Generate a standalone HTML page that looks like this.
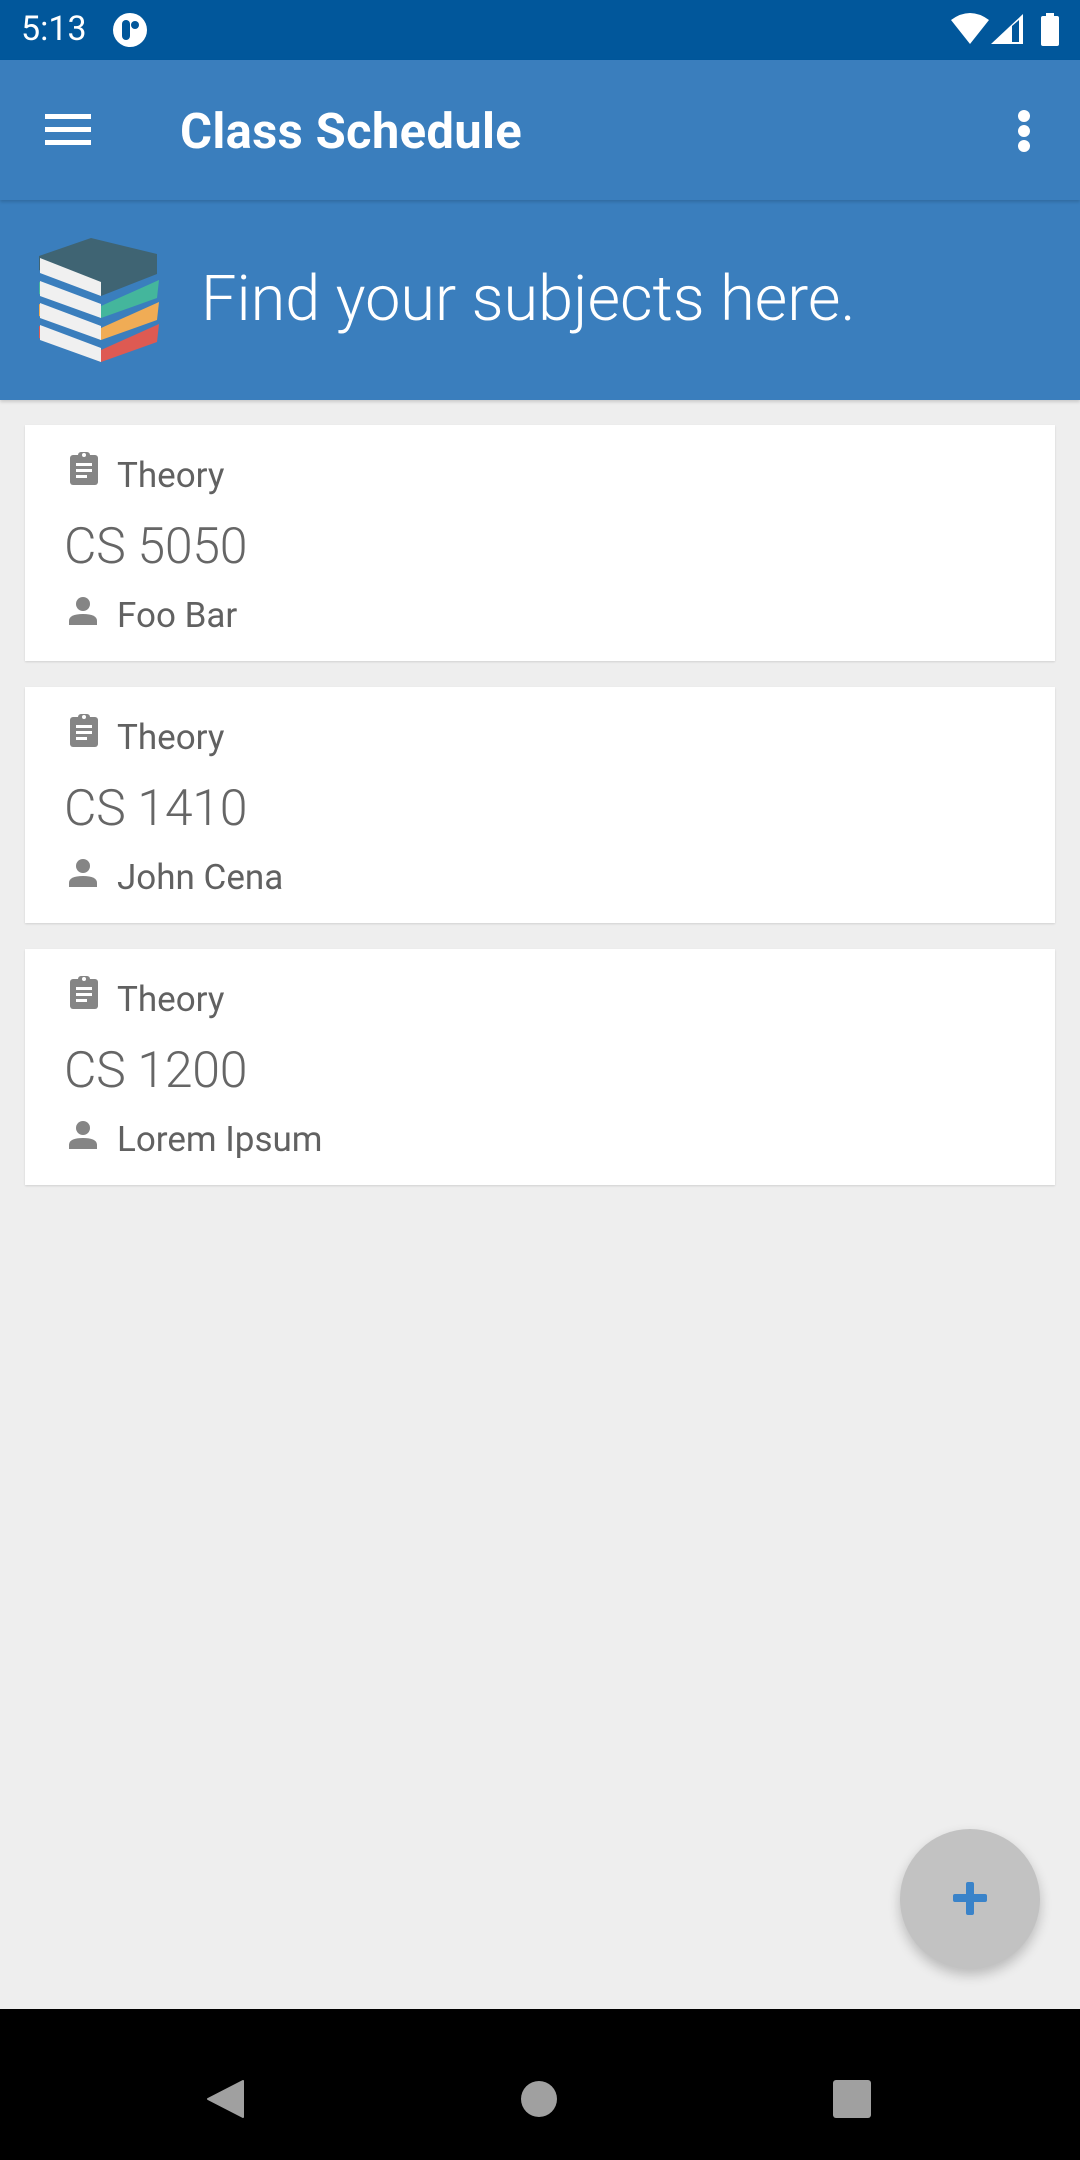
<!DOCTYPE html>
<html><head><meta charset="utf-8"><style>
*{margin:0;padding:0;box-sizing:border-box}
body{width:1080px;height:2160px;background:#eeeeee;position:relative;overflow:hidden;font-family:"Roboto","Liberation Sans",sans-serif}
.abs{position:absolute}
.t{position:absolute;white-space:nowrap;line-height:1}
.card{position:absolute;left:25px;width:1030px;height:236px;background:#fff;box-shadow:0 1px 2px rgba(0,0,0,.12)}
.card .a{left:92px;top:33px;font-size:35px;color:#616161}
.card .b{left:39px;top:97px;font-size:50px;color:#666;font-weight:300;letter-spacing:-0.3px}
.card .c{left:92px;top:173px;font-size:35px;color:#616161}
</style></head><body>
<div class="abs" style="left:0;top:0;width:1080px;height:60px;background:#01579b"></div>
<div class="t" style="left:21px;top:12px;font-size:34px;color:#fff">5:13</div>
<svg class="abs" style="left:112px;top:12px" width="36" height="36" viewBox="0 0 36 36"><circle cx="18" cy="18" r="17" fill="#fff"/><rect x="10" y="8" width="8" height="20" rx="4" fill="#01579b"/><circle cx="23" cy="13" r="4" fill="#01579b"/></svg>
<svg class="abs" style="left:950px;top:12px" width="40" height="34" viewBox="0 0 40 34"><path d="M1 8 Q20 -6 39 8 L20 32 Z" fill="#fff"/></svg>
<svg class="abs" style="left:990px;top:13px" width="34" height="32" viewBox="0 0 34 32"><path d="M1 31 L33 1 L33 31 Z" fill="#fff"/><path d="M22 13 L29 7 L29 29 L22 29 Z" fill="#01579b"/></svg>
<svg class="abs" style="left:1040px;top:13px" width="20" height="33" viewBox="0 0 20 33"><rect x="6" y="0" width="8" height="4" fill="#fff"/><rect x="1" y="3" width="18" height="30" rx="2" fill="#fff"/></svg>

<div class="abs" style="left:0;top:60px;width:1080px;height:140px;background:#3a7ebd;box-shadow:0 2px 3px rgba(0,0,0,.15);z-index:2"></div>
<div class="abs" style="left:45px;top:114px;width:46px;height:5px;background:#fff;z-index:3"></div>
<div class="abs" style="left:45px;top:127px;width:46px;height:5px;background:#fff;z-index:3"></div>
<div class="abs" style="left:45px;top:140px;width:46px;height:5px;background:#fff;z-index:3"></div>
<div class="t" style="left:180px;top:107px;font-size:49px;font-weight:bold;color:#fff;z-index:3;letter-spacing:0.3px">Class Schedule</div>
<div class="abs" style="left:1018px;top:110px;width:12px;height:12px;border-radius:50%;background:#fff;z-index:3"></div>
<div class="abs" style="left:1018px;top:125px;width:12px;height:12px;border-radius:50%;background:#fff;z-index:3"></div>
<div class="abs" style="left:1018px;top:140px;width:12px;height:12px;border-radius:50%;background:#fff;z-index:3"></div>

<div class="abs" style="left:0;top:200px;width:1080px;height:200px;background:#3a7ebd;box-shadow:0 2px 3px rgba(0,0,0,.15)"></div>
<svg class="abs" style="left:37px;top:238px" width="122" height="126" viewBox="0 0 122 126">
 <path d="M2 88 L64 112 L122 86 L120 104 L64 124 L2 100 Z" fill="#de5a52"/>
 <path d="M3 87 L64 110 L64 124 L3 102 Z" fill="#f0f0f0"/>
 <path d="M2 66 L64 90 L122 64 L120 82 L64 102 L2 78 Z" fill="#f0ac55"/>
 <path d="M3 65 L64 88 L64 102 L3 80 Z" fill="#f0f0f0"/>
 <path d="M2 44 L64 68 L122 42 L120 60 L64 80 L2 56 Z" fill="#44b69c"/>
 <path d="M3 43 L64 66 L64 80 L3 58 Z" fill="#f0f0f0"/>
 <path d="M2 18 L54 0 L120 16 L120 36 L64 58 L2 32 Z" fill="#3f6473"/>
 <path d="M3 20 L64 44 L64 58 L3 35 Z" fill="#f0f0f0"/>
</svg>
<div class="t" style="left:201px;top:268px;font-size:63px;color:#fff;font-weight:300">Find your subjects here.</div>

<div class="card" style="top:425px">
 <svg class="abs" style="left:43px;top:26px" width="32" height="36" viewBox="0 0 32 36"><rect x="2" y="4" width="28" height="30" rx="3" fill="#858585"/><rect x="10" y="1" width="12" height="7" rx="3" fill="#858585"/><circle cx="16" cy="4" r="2" fill="#fff"/><rect x="8" y="12" width="16" height="3" fill="#fff"/><rect x="8" y="18" width="16" height="3" fill="#fff"/><rect x="8" y="24" width="11" height="3" fill="#fff"/></svg>
 <div class="t a">Theory</div><div class="t b">CS 5050</div>
 <svg class="abs" style="left:44px;top:172px" width="28" height="28" viewBox="0 0 28 28"><circle cx="14" cy="7" r="7" fill="#858585"/><path d="M0 28 L0 24 Q0 17 14 17 Q28 17 28 24 L28 28 Z" fill="#858585"/></svg>
 <div class="t c">Foo Bar</div>
</div>
<div class="card" style="top:687px">
 <svg class="abs" style="left:43px;top:26px" width="32" height="36" viewBox="0 0 32 36"><rect x="2" y="4" width="28" height="30" rx="3" fill="#858585"/><rect x="10" y="1" width="12" height="7" rx="3" fill="#858585"/><circle cx="16" cy="4" r="2" fill="#fff"/><rect x="8" y="12" width="16" height="3" fill="#fff"/><rect x="8" y="18" width="16" height="3" fill="#fff"/><rect x="8" y="24" width="11" height="3" fill="#fff"/></svg>
 <div class="t a">Theory</div><div class="t b">CS 1410</div>
 <svg class="abs" style="left:44px;top:172px" width="28" height="28" viewBox="0 0 28 28"><circle cx="14" cy="7" r="7" fill="#858585"/><path d="M0 28 L0 24 Q0 17 14 17 Q28 17 28 24 L28 28 Z" fill="#858585"/></svg>
 <div class="t c">John Cena</div>
</div>
<div class="card" style="top:949px">
 <svg class="abs" style="left:43px;top:26px" width="32" height="36" viewBox="0 0 32 36"><rect x="2" y="4" width="28" height="30" rx="3" fill="#858585"/><rect x="10" y="1" width="12" height="7" rx="3" fill="#858585"/><circle cx="16" cy="4" r="2" fill="#fff"/><rect x="8" y="12" width="16" height="3" fill="#fff"/><rect x="8" y="18" width="16" height="3" fill="#fff"/><rect x="8" y="24" width="11" height="3" fill="#fff"/></svg>
 <div class="t a">Theory</div><div class="t b">CS 1200</div>
 <svg class="abs" style="left:44px;top:172px" width="28" height="28" viewBox="0 0 28 28"><circle cx="14" cy="7" r="7" fill="#858585"/><path d="M0 28 L0 24 Q0 17 14 17 Q28 17 28 24 L28 28 Z" fill="#858585"/></svg>
 <div class="t c">Lorem Ipsum</div>
</div>

<div class="abs" style="left:900px;top:1829px;width:140px;height:140px;border-radius:50%;background:#c2c2c2;box-shadow:0 6px 12px rgba(0,0,0,.22)"></div>
<div class="abs" style="left:953px;top:1894px;width:34px;height:8px;border-radius:2px;background:#3a83c9"></div>
<div class="abs" style="left:966px;top:1882px;width:8px;height:33px;border-radius:2px;background:#3a83c9"></div>

<div class="abs" style="left:0;top:2009px;width:1080px;height:151px;background:#000"></div>
<svg class="abs" style="left:205px;top:2079px" width="40" height="40" viewBox="0 0 40 40"><path d="M38 2 L38 38 L3 20 Z" fill="#a0a0a0" stroke="#a0a0a0" stroke-width="2" stroke-linejoin="round"/></svg>
<div class="abs" style="left:521px;top:2081px;width:36px;height:36px;border-radius:50%;background:#a0a0a0"></div>
<div class="abs" style="left:833px;top:2080px;width:38px;height:38px;border-radius:3px;background:#a0a0a0"></div>
</body></html>
